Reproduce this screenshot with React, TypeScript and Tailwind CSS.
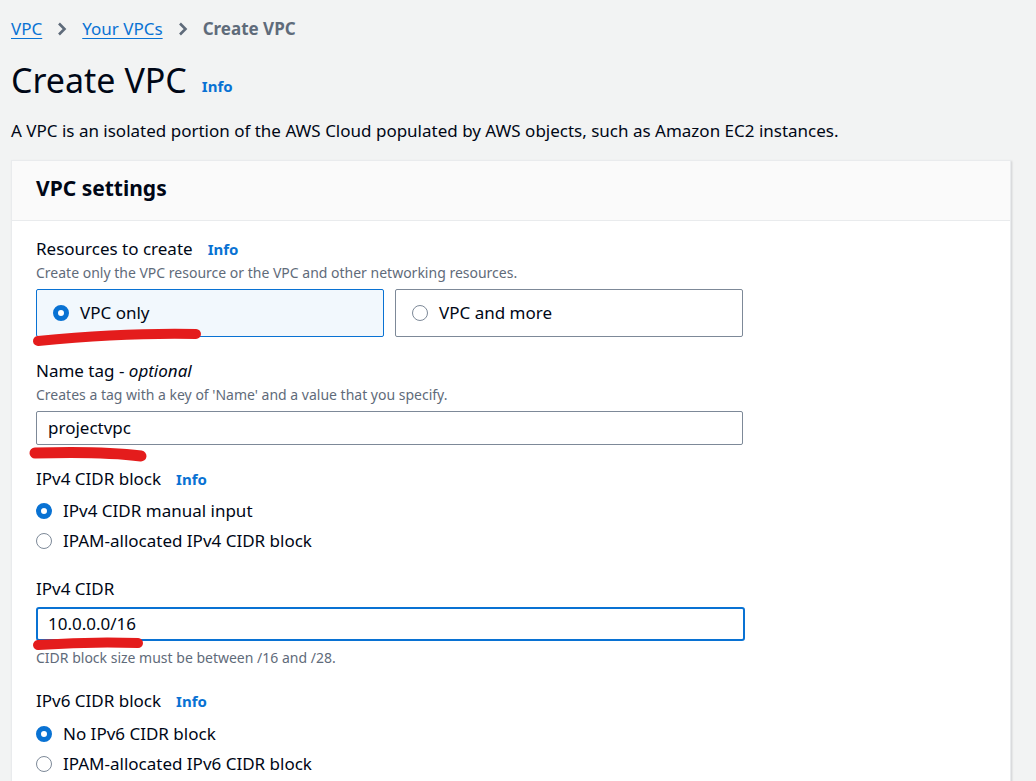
import React from "react";

const font = { fontFamily: '"Noto Sans", "Open Sans", Arial, sans-serif' };

function Info() {
  return <span className="ml-[15px] text-[15px] font-bold text-[#0972d3]">Info</span>;
}

function Radio({ checked }: { checked: boolean }) {
  return checked ? (
    <span className="inline-block h-[16px] w-[16px] shrink-0 rounded-full border-[5px] border-[#0972d3] bg-white" />
  ) : (
    <span className="inline-block h-[16px] w-[16px] shrink-0 rounded-full border-[1.5px] border-[#7d8998] bg-white" />
  );
}

function RadioRow({ checked, label }: { checked: boolean; label: string }) {
  return (
    <div className="flex h-[30px] items-center gap-[11px] text-[17px] text-[#000716]">
      <Radio checked={checked} />
      <span>{label}</span>
    </div>
  );
}

function Chevron() {
  return (
    <svg width="14" height="14" viewBox="0 0 14 14" className="mx-[13px]">
      <path d="M4 1.5 L9.5 7 L4 12.5" fill="none" stroke="#5f6b7a" strokeWidth="2.6" />
    </svg>
  );
}

export default function App() {
  return (
    <div className="relative h-screen overflow-hidden bg-[#f2f3f3] pl-[11px]" style={font}>
      {/* Breadcrumbs */}
      <div className="mt-[17px] flex h-[24px] items-center text-[17px]">
        <span className="text-[#0972d3] underline underline-offset-[3px]">VPC</span>
        <Chevron />
        <span className="text-[#0972d3] underline underline-offset-[3px]">Your VPCs</span>
        <Chevron />
        <span className="font-bold text-[#5f6b7a]">Create VPC</span>
      </div>

      <div className="mt-[17px] flex h-[44px] items-center">
        <h1 className="text-[34px] leading-[44px] text-[#000716]">Create VPC</h1>
        <span className="ml-[15px] mt-[12px] text-[15px] font-bold text-[#0972d3]">Info</span>
      </div>

      <p className="mt-[17px] text-[17px] leading-[24px] text-[#000716]">
        A VPC is an isolated portion of the AWS Cloud populated by AWS objects, such as Amazon EC2 instances.
      </p>

      {/* Card */}
      <div className="mt-[17px] w-[1000px] border border-[#e9ebed] bg-white shadow-[1px_1px_2px_rgba(0,7,22,0.15)]">
        <div className="border-b border-[#e9ebed] bg-[#fafafa] pb-[18px] pl-[24px] pt-[13px]">
          <h2 className="text-[21px] font-bold leading-[28px] text-[#000716]">VPC settings</h2>
        </div>

        <div className="pl-[24px] pt-[16px] pb-[40px]">
          {/* Resources to create */}
          <div className="flex h-[24px] items-center text-[17px] text-[#000716]">
            Resources to create
            <Info />
          </div>
          <p className="mt-[2px] text-[14px] leading-[20px] text-[#5f6b7a]">
            Create only the VPC resource or the VPC and other networking resources.
          </p>
          <div className="mt-[6px] flex gap-[11px]">
            <div className="flex h-[48px] w-[348px] items-center gap-[11px] rounded-[2px] border border-[#0972d3] bg-[#f2f8fd] pl-[16px] text-[17px] text-[#000716]">
              <Radio checked />
              <span>VPC only</span>
            </div>
            <div className="flex h-[48px] w-[348px] items-center gap-[11px] rounded-[2px] border border-[#7d8998] bg-white pl-[16px] text-[17px] text-[#000716]">
              <Radio checked={false} />
              <span>VPC and more</span>
            </div>
          </div>

          {/* Name tag */}
          <div className="mt-[22px] flex h-[24px] items-center text-[17px] text-[#000716]">
            Name tag -&nbsp;<i>optional</i>
          </div>
          <p className="mt-[2px] text-[14px] leading-[20px] text-[#5f6b7a]">
            Creates a tag with a key of 'Name' and a value that you specify.
          </p>
          <div className="mt-[6px] flex h-[34px] w-[707px] items-center rounded-[2px] border border-[#7d8998] bg-white pl-[11px] text-[17px] text-[#000716]">
            projectvpc
          </div>

          {/* IPv4 CIDR block */}
          <div className="mt-[22px] flex h-[24px] items-center text-[17px] text-[#000716]">
            IPv4 CIDR block
            <Info />
          </div>
          <div className="mt-[5px]">
            <RadioRow checked label="IPv4 CIDR manual input" />
            <RadioRow checked={false} label="IPAM-allocated IPv4 CIDR block" />
          </div>

          {/* IPv4 CIDR */}
          <div className="mt-[21px] flex h-[24px] items-center text-[17px] text-[#000716]">IPv4 CIDR</div>
          <div className="mt-[6px] flex h-[34px] w-[709px] items-center rounded-[3px] border-2 border-[#0972d3] bg-white pl-[10px] text-[17px] text-[#000716]">
            10.0.0.0/16
          </div>
          <p className="mt-[7px] text-[14px] leading-[20px] text-[#5f6b7a]">
            CIDR block size must be between /16 and /28.
          </p>

          {/* IPv6 CIDR block */}
          <div className="mt-[21px] flex h-[24px] items-center text-[17px] text-[#000716]">
            IPv6 CIDR block
            <Info />
          </div>
          <div className="mt-[6px]">
            <RadioRow checked label="No IPv6 CIDR block" />
            <RadioRow checked={false} label="IPAM-allocated IPv6 CIDR block" />
          </div>
        </div>
      </div>

      {/* Hand-drawn red marks over the screenshot */}
      <svg className="pointer-events-none absolute left-0 top-0" width="1036" height="781">
        <g fill="none" stroke="#e41c1c" strokeLinecap="round">
          <path d="M38 341 C 90 336, 150 333, 196 334" strokeWidth="10" />
          <path d="M35 453 C 70 452, 110 452, 141 456" strokeWidth="11" />
          <path d="M38 645 C 80 642, 110 642, 138 643" strokeWidth="10" />
        </g>
      </svg>
    </div>
  );
}
